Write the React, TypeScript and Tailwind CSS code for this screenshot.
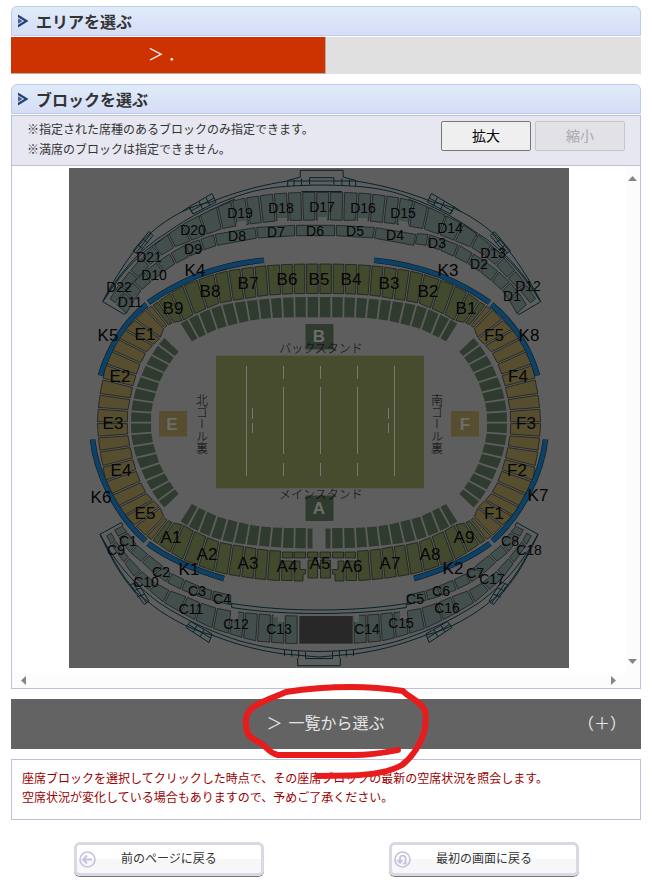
import React from 'react';

type Cut = [number, number, number, number];
type Label = [string, number, number];

// Each cut runs from the outer edge to the inner edge of a ring: x1, y1, x2, y2
const upperStand: Cut[] = [
  [319, 264, 319, 293.5], [305.7, 264, 305.7, 293.5], [293.2, 264.3, 293.5, 293.7],
  [280.3, 264.8, 281.5, 294.2], [266.7, 265.7, 269, 295], [254, 267, 257, 296.5],
  [240.7, 269, 244.7, 298.7], [228, 271, 232.5, 300.5], [214.5, 274.3, 219.5, 303],
  [198, 280, 206.7, 308.3], [183.5, 285.7, 194, 314], [170.7, 293, 183, 320.5],
  [158.5, 301.5, 173, 322.5], [152.3, 305.7, 167.5, 325],
];
const goalStand: Cut[] = [
  [152.3, 305.7, 167.5, 325], [146, 309.5, 164, 328], [135.7, 320, 160, 338],
  [125, 329.5, 153, 345], [116.7, 337.8, 146, 352.5], [110, 350, 140.3, 363.5],
  [105.5, 364.3, 136, 375], [103, 379, 132.7, 386.7], [100, 394.3, 130, 398.7],
  [98.3, 408.3, 127.8, 410.5], [97.3, 422.7, 127.3, 422.7],
];
const lowerSide: Cut[] = [
  [319, 297, 319, 317.3], [306.7, 297, 306.7, 317.3], [294.3, 297.3, 294.7, 317.3],
  [282, 297.8, 283, 317.5], [270, 298.7, 272, 318], [258, 299.7, 260.5, 319],
  [246, 301, 249.5, 320.7], [233.7, 302.8, 238.5, 323.3], [221.7, 305.3, 227.5, 326],
  [210.3, 309, 217, 329], [198.7, 314, 206.5, 334], [188, 319.3, 198.3, 338],
  [180, 324.3, 191, 341.7],
];
const lowerGoal: Cut[] = [
  [165, 337.3, 179.3, 351], [158.3, 345, 174.3, 356.7], [151.7, 355, 169, 364.3],
  [146, 365, 164, 372.7], [141, 376.3, 159.3, 382.3], [136.3, 387.7, 156, 392.3],
  [133.3, 399.3, 153, 402.3], [131.3, 411.3, 151.2, 412.7], [131, 422.7, 151, 422.7],
];
const dOuter: Cut[] = [
  [315.8, 192.3, 315.8, 220], [301.7, 192.5, 302.5, 220.3], [287.3, 193, 289.3, 220.3],
  [273.3, 194, 276, 221], [259.3, 196, 262.3, 222.5], [245.7, 198, 249.5, 224],
  [231.7, 201.3, 236.7, 226], [217.3, 207, 222, 228.7], [199.5, 215.5, 206, 234.5],
  [182.5, 224.5, 191, 240.5], [168, 234.5, 174.5, 247], [153.7, 246, 161, 255.5],
  [142, 257.5, 149.5, 265], [130, 271, 138, 277.5], [119.5, 284.5, 126.5, 289],
  [109.5, 299.5, 114.5, 303.5],
];
const dInnerStart: Cut[] = [
  [295.5, 225.3, 295.5, 235.7], [255.7, 227.5, 257.3, 238], [214.5, 234.5, 216.5, 245.5],
];
const dInnerEnd: Cut[] = [
  [214.5, 234.5, 216.5, 245.5], [200, 239.5, 203.5, 250], [185, 245, 189, 256.5],
  [170.5, 253.5, 175.5, 263.5], [157, 262.5, 163.5, 271.5], [145, 271.5, 151.5, 281],
  [133.5, 282.5, 141.5, 290], [125, 292.5, 134, 300.5], [116.5, 305.5, 126, 314],
];
const cInner: Cut[] = [
  [114.3, 529, 121.7, 525.7], [118.5, 537, 127.5, 532.5], [130, 552.3, 136.5, 545],
  [141.7, 561.7, 148.5, 555], [154.3, 573.3, 163.3, 566.7], [167, 582.3, 171, 573.3],
  [181, 589.3, 184.5, 580], [196.7, 595.7, 200, 586.7], [211, 600, 212.7, 591],
  [231.5, 605, 231.7, 595.5],
];
const cOuter: Cut[] = [
  [106.3, 535, 110.7, 532.3], [111.7, 545, 115.5, 541], [124.3, 562.7, 129, 558],
  [134.3, 576.7, 141, 571], [149, 590, 155.5, 583], [163.7, 602.3, 169.7, 590.7],
  [180, 611.7, 186.7, 597], [195.3, 620, 200.5, 603], [212.7, 628.3, 216.7, 608.3],
  [229, 633.5, 231.7, 611.3], [242.7, 637.7, 245, 612.7], [256.7, 641, 258.3, 614],
  [270.7, 642.3, 271.3, 615], [284.7, 643.3, 284.7, 615.7], [298, 643.7, 298, 616],
];

const smallLabels: Label[] = [
  ['D22', 119, 287], ['D21', 149, 257], ['D20', 193, 230], ['D19', 240, 213], ['D18', 281, 208],
  ['D17', 322, 207], ['D16', 363, 208], ['D15', 403, 213], ['D14', 450, 228], ['D13', 493, 253],
  ['D12', 528, 286], ['D11', 130, 302], ['D10', 154, 275], ['D9', 193, 249], ['D8', 237, 236],
  ['D7', 276, 232], ['D6', 315, 231], ['D5', 355, 231], ['D4', 395, 235], ['D3', 437, 243],
  ['D2', 479, 264], ['D1', 512, 296], ['C1', 128, 541], ['C9', 116, 550], ['C2', 161, 572],
  ['C10', 146, 582], ['C3', 197, 591], ['C4', 222, 599], ['C11', 191, 609], ['C12', 236, 624],
  ['C13', 279, 629], ['C14', 367, 629], ['C15', 401, 623], ['C16', 447, 608], ['C5', 415, 599],
  ['C6', 441, 591], ['C7', 475, 573], ['C17', 492, 579], ['C8', 510, 541], ['C18', 529, 550],
];
const bigLabels: Label[] = [
  ['B9', 173, 308], ['B8', 210, 291], ['B7', 248, 283], ['B6', 287, 279], ['B5', 319, 279],
  ['B4', 351, 279], ['B3', 389, 283], ['B2', 428, 291], ['B1', 466, 308], ['E1', 145, 334],
  ['E2', 120, 376], ['E3', 113, 423], ['E4', 121, 470], ['E5', 145, 513], ['F5', 494, 335],
  ['F4', 518, 376], ['F3', 526, 423], ['F2', 517, 470], ['F1', 494, 513], ['A1', 171, 537],
  ['A2', 207, 554], ['A3', 248, 563], ['A4', 287, 566], ['A5', 320, 563], ['A6', 352, 566],
  ['A7', 390, 563], ['A8', 430, 554], ['A9', 464, 537],
];
const kLabels: Label[] = [
  ['K4', 195, 270], ['K3', 448, 270], ['K5', 108, 335], ['K8', 529, 335],
  ['K6', 101, 497], ['K7', 538, 495], ['K1', 189, 569], ['K2', 453, 568],
];

const flipX = (cuts: Cut[], c: number): Cut[] =>
  cuts.map(([a, b, d, e]) => [2 * c - a, b, 2 * c - d, e]);
const flipY = (cuts: Cut[], c: number): Cut[] =>
  cuts.map(([a, b, d, e]) => [a, 2 * c - b, d, 2 * c - e]);

const towards = (x1: number, y1: number, x2: number, y2: number, by: number) => {
  const t = by / Math.hypot(x2 - x1, y2 - y1);
  return `${x1 + (x2 - x1) * t},${y1 + (y2 - y1) * t}`;
};

interface BandProps {
  cuts: Cut[];
  fill: string;
  plain?: boolean;
}

const Band: React.FC<BandProps> = ({ cuts, fill, plain }) => (
  <g fill={fill} stroke={plain ? 'none' : '#14191a'} strokeWidth="0.7">
    {cuts.slice(1).map((b, i) => {
      const a = cuts[i];
      const points = [
        towards(a[0], a[1], b[0], b[1], 0.9),
        towards(b[0], b[1], a[0], a[1], 0.9),
        towards(b[2], b[3], a[2], a[3], 0.9),
        towards(a[2], a[3], b[2], b[3], 0.9),
      ];
      return <polygon key={i} points={points.join(' ')} />;
    })}
  </g>
);

interface LabelsProps {
  items: Label[];
  size: number;
}

const Labels: React.FC<LabelsProps> = ({ items, size }) => (
  <g fontSize={size} textAnchor="middle" fill="#050505">
    {items.map(([text, x, y]) => (
      <text key={text} x={x} y={y + Math.round(size * 0.36)}>{text}</text>
    ))}
  </g>
);

const olive = '#414a2d';
const gold = '#564e2e';
const slate = '#424f4d';
const moss = '#2f3b2e';

const DOutline = () => (
  <g>
    <path d="M102.7 301.7C115 277 134 248 150 233.5C170 216 192 205 211 202C240 190 268 184 287.7 181H321.7" />
    <path d="M102.7 301.7C122 268 145 246 165 234C190 216 215 203 247 193C265 188 283 185.500 321.700 185" />
    <path d="M104 300C125 268 140 253 165 237C190 220 212 209 235 199" />
    <path d="M102.700 301.700L124.500 314.500L127.500 311" />
    <path d="M189 207L212 193.500L216 202L193 214ZM199 201.500L203 209.500M206 197.500L210 206M191 211L214 198M183 211L189 207M189 207L193 214" />
    <path d="M133 251L149 231.500L153 235.500L138 254ZM138 245L143 249M143 239L148 243M136 253L151 233.500" />
    <path d="M300.300 177V170.300H321.700M309.500 184.500V177.700H321.700M287.700 180.500V186.500M294 179.500V186M301.500 178.500V185.500" />
    <path d="M300.300 177L287.700 180.500M301.500 191.500H321.700" />
  </g>
);

const COutline = () => (
  <g>
    <path d="M100 534.300L121.500 522.500L123 526M100 534.300C112 560 126 588 146 600C163 615 190 630 212 635C240 646 262 651 284 654L319 657" />
    <path d="M100 534.300C118 567 136 585 158 602C188 622 215 633 240 641C262 647 284 651 319 651.500" />
    <path d="M100 534.300C110 553 120 574 134 589" />
    <path d="M129.500 585L137 582L149 601L144.500 604.500ZM133 591L140.500 588M137 597L145 594M133.500 584L146.500 603" />
    <path d="M186 627.500L190.500 621.500L212 634L209 642.500ZM193 632L197 625.500M200 637L204 629.500M188.500 624.500L210.500 638" />
    <path d="M297.700 658V665.700H319M305.500 651.500V658.500H319M284.500 649.500V656M291.700 650V656.500M298.700 650.500V657.500" />
    <path d="M231.700 603V607.500C260 612 290 613.500 319 613.500M231.700 603.500C260 608 290 610 319 610" />
  </g>
);

const StadiumMap = () => (
  <svg
    className="h-auto w-[500px] max-w-full"
    viewBox="69 168 500 500"
    role="img"
    aria-label="座席ブロック"
    fontFamily='"Liberation Sans", "Noto Sans CJK JP", sans-serif'
  >
    <rect x="69" y="168" width="500" height="500" fill="#5e5e5e" />

    <g fill="none" stroke="#06222a" strokeWidth="1">
      <DOutline />
      <g transform="matrix(-1 0 0 1 643.4 0)"><DOutline /></g>
      <COutline />
      <g transform="matrix(-1 0 0 1 638 0)"><COutline /></g>
    </g>

    {/* upper tiers */}
    <Band cuts={dOuter} fill={slate} />
    <Band cuts={flipX(dOuter, 322.7)} fill={slate} />
    <Band cuts={[dOuter[0], [329.6, 192.3, 329.6, 220]]} fill={slate} />
    <Band cuts={dInnerStart} fill={slate} />
    <Band cuts={flipX(dInnerStart, 315.5)} fill={slate} />
    <Band cuts={[dInnerStart[0], [335.5, 225.3, 335.5, 235.7]]} fill={slate} />
    <Band cuts={dInnerEnd} fill={slate} />
    <Band cuts={[[416.5, 233.5, 414.5, 243.5], ...flipX(dInnerEnd, 321.7)]} fill={slate} />
    <Band cuts={cInner} fill={slate} />
    <Band cuts={flipX(cInner, 319)} fill={slate} />
    <Band cuts={cOuter} fill={slate} />
    <Band cuts={flipX(cOuter, 319).slice(0, -1)} fill={slate} />
    <g fill="#5e5e5e">
      <path d="M318 217h9v4h-9zM277.500 218h9.500v4h-9.500zM358 218h9.500v4h-9.500zM237 222l9-1.500v5l-9 1.500zM399 220.500l9 1.500v5l-9-1.500z" />
      <path d="M231 611h7v8h-7zM273.500 614h6v3h-6zM278 614h6v8h-6zM354 614h5v8h-5zM400 611h7v8h-7z" />
    </g>
    <rect x="299.300" y="616" width="53.400" height="27.700" fill="#282828" />

    {/* main ring */}
    <Band cuts={upperStand} fill={olive} />
    <Band cuts={flipX(upperStand, 319)} fill={olive} />
    <Band cuts={flipY(upperStand.slice(3), 422.7)} fill={olive} />
    <Band cuts={flipX(flipY(upperStand.slice(3), 422.7), 319)} fill={olive} />
    <Band cuts={goalStand} fill={gold} />
    <Band cuts={flipX(goalStand, 319)} fill={gold} />
    <Band cuts={flipY(goalStand, 422.7)} fill={gold} />
    <Band cuts={flipX(flipY(goalStand, 422.7), 319)} fill={gold} />
    <g fill={olive} stroke="#14191a" strokeWidth="0.7">
      <path d="M282.500 552h10.500v6h-10.500zM294 552h11.500v6h-11.500zM307.500 552h10.500v6h-10.500zM320 552h10.500v6h-10.500zM332.500 552h11v6h-11zM345 552h10.500v6h-10.500z" />
      <path d="M282 561h10v19.500h-10.500zM308 560h9.500v18h-9.500zM320.500 560h10v18h-10zM346 561h10l.5 19.500h-10.500z" />
      <path d="M294 561h6v8.500h5.500v4.500h-2.500v7h-9zM344 561h-6v8.500h-5.500v4.500h2.500v7h9z" />
    </g>

    {/* lower seats */}
    <Band cuts={lowerSide} fill={moss} plain />
    <Band cuts={flipX(lowerSide, 319)} fill={moss} plain />
    <Band cuts={flipY(lowerSide.slice(1), 422.7)} fill={moss} plain />
    <Band cuts={flipX(flipY(lowerSide.slice(1), 422.7), 319)} fill={moss} plain />
    <path d="M307.500 528.500h5v20h-5zM325.500 528.500h5v20h-5z" fill={moss} />
    <Band cuts={lowerGoal} fill={moss} plain />
    <Band cuts={flipX(lowerGoal, 319)} fill={moss} plain />
    <Band cuts={flipY(lowerGoal, 422.7)} fill={moss} plain />
    <Band cuts={flipX(flipY(lowerGoal, 422.7), 319)} fill={moss} plain />

    {/* K seats */}
    {['#14191a', '#0c4168'].map((color, i) => (
      <g key={color} fill="none" stroke={color} strokeWidth={i ? 4.4 : 5.6}>
        {['', 'matrix(-1 0 0 1 638 0)'].map((transform) => (
          <g key={transform} transform={transform || undefined}>
            <path d="M264 260.200C240 262.500 218 268 199 275C180 283 164 291.500 148.500 302.500" />
            <path d="M146.500 304.500C126 321 109 346 100.500 375.500" />
            <path d="M92.500 439.500C96 472 115 514 145.500 541" />
            <path d="M148 543.500C170 560 195 570 224 578.500" />
          </g>
        ))}
      </g>
    ))}

    {/* pitch */}
    <rect x="216" y="355.700" width="208" height="132.500" fill="#484c2e" />
    <path
      d="M246.500 366v110M394.500 366v110M283.500 366v13m0 8v67m0 9v13M320.500 366v13m0 8v67m0 9v13M357.500 366v13m0 8v67m0 9v13M252.500 408v11m0 4v10M388.500 408v11m0 4v10"
      stroke="#777870"
      strokeWidth="1"
      fill="none"
    />

    <rect x="305.500" y="324" width="28" height="25.500" fill={moss} />
    <rect x="305.500" y="495.500" width="28" height="25.500" fill={moss} />
    <rect x="159" y="411" width="28" height="25.500" fill={gold} />
    <rect x="451" y="411" width="28" height="25.500" fill={gold} />
    <g fontSize="17" fontWeight="bold" textAnchor="middle" fill="#6c6d6a">
      <text x="319" y="342">B</text>
      <text x="319" y="514">A</text>
      <text x="172" y="430">E</text>
      <text x="465" y="430">F</text>
    </g>

    <g fontFamily='"Noto Sans CJK JP", sans-serif' fontSize="12" fontWeight="300" fill="#080808">
      <text x="321" y="353" textAnchor="middle">バックスタンド</text>
      <text x="321" y="499" textAnchor="middle">メインスタンド</text>
      <text x="202" y="394" style={{ writingMode: 'vertical-rl' }}>北ゴール裏</text>
      <text x="437" y="394" style={{ writingMode: 'vertical-rl' }}>南ゴール裏</text>
    </g>

    <Labels items={smallLabels} size={14} />
    <Labels items={kLabels} size={17} />
    <Labels items={bigLabels} size={17} />
  </svg>
);

interface SectionTitleProps {
  children: React.ReactNode;
}

const SectionTitle: React.FC<SectionTitleProps> = ({ children }) => (
  <h2 className="flex h-[30px] items-center gap-[7px] rounded-t-md border border-[#bccaec] bg-gradient-to-b from-[#dfebf9] to-[#d5ddf6] pl-[5px] text-base leading-[28px] font-bold text-[#333333]">
    <svg className="h-[14px] w-[12px]" viewBox="0 0 12 14" aria-hidden="true">
      <path d="M1 0.500L11.500 7L1 13.500V10.800L7.300 7L1 3.200Z" fill="#263f7b" />
      <path d="M1 4.200L5.600 7L1 9.800Z" fill="#4a5f92" />
    </svg>
    <span className="pb-px">{children}</span>
  </h2>
);

interface BackButtonProps {
  label: string;
  children: React.ReactNode;
}

const BackButton: React.FC<BackButtonProps> = ({ label, children }) => (
  <button
    type="button"
    className="flex h-[34px] w-[190px] items-center rounded-md border-[3px] border-[#d9d8e4] bg-gradient-to-b from-white from-50% to-[#f7f7f9] to-50% pl-[2px] text-xs text-[#333333] shadow-[0_1px_0_#777777]"
  >
    <svg className="h-[17px] w-[17px]" viewBox="0 0 17 17" fill="none" stroke="#c4c2de" aria-hidden="true">
      <circle cx="8.500" cy="8.500" r="7.500" strokeWidth="1.600" />
      {children}
    </svg>
    <span className="flex-1 pr-[18px] pb-[2px] text-center">{label}</span>
  </button>
);

const App: React.FC = () => {
  return (
    <main className="bg-white pr-[10px] pb-1 pl-[11px] pt-[6px] font-['Noto_Sans_CJK_JP',sans-serif] text-[#333333]">
      <SectionTitle>エリアを選ぶ</SectionTitle>
      <div className="mt-px mb-[10px] grid h-[37px] grid-cols-2 bg-[#e0e0e0]">
        <button type="button" className="flex items-center justify-center gap-1 border-r border-b border-[#b9aaa4] bg-[#cc3300] pr-1 pb-1 text-base text-white">
          <span>＞</span>
          <span>．</span>
        </button>
      </div>

      <SectionTitle>ブロックを選ぶ</SectionTitle>
      <section className="mt-px border border-[#bfbfdc]">
        <div className="flex h-[50px] items-start justify-between border-b border-[#bfbfdc] bg-[#e7e7f1] pr-[15px] pl-[15px]">
          <p className="pt-[3px] text-xs leading-[20px]">
            ※指定された席種のあるブロックのみ指定できます。
            <br />
            ※満席のブロックは指定できません。
          </p>
          <div className="flex gap-1 pt-[5px] text-sm">
            <button type="button" className="h-[30px] w-[90px] rounded-xs border border-[#767676] bg-[#efefef] pb-[2px] text-black">
              拡大
            </button>
            <button type="button" disabled className="h-[30px] w-[90px] rounded-xs border border-[#c5c5cc] bg-[#e1e1e6] pb-[2px] text-[#aaaaac]">
              縮小
            </button>
          </div>
        </div>

        <div className="grid grid-cols-[1fr_15px]">
          <div className="flex justify-center pt-[2px] pb-[5px]">
            <StadiumMap />
          </div>
          <div className="flex flex-col items-center justify-between bg-[#fcfcfc] pt-[10px] pb-[9px]">
            <svg className="h-[5px] w-[9px]" viewBox="0 0 9 5" aria-hidden="true">
              <path d="M0 5L4.500 0L9 5Z" fill="#858585" />
            </svg>
            <svg className="h-[5px] w-[9px]" viewBox="0 0 9 5" aria-hidden="true">
              <path d="M0 0L4.500 5L9 0Z" fill="#858585" />
            </svg>
          </div>
          <div className="flex h-[15px] items-center justify-between bg-[#fcfcfc] px-[9px]">
            <svg className="h-[9px] w-[5px]" viewBox="0 0 5 9" aria-hidden="true">
              <path d="M5 0L0 4.500L5 9Z" fill="#858585" />
            </svg>
            <svg className="h-[9px] w-[5px]" viewBox="0 0 5 9" aria-hidden="true">
              <path d="M0 0L5 4.500L0 9Z" fill="#858585" />
            </svg>
          </div>
          <div className="bg-[#fcfcfc]" />
        </div>
      </section>

      <div className="relative mt-[10px]">
        <button type="button" className="grid h-[50px] w-full grid-cols-[1fr_auto_1fr] items-center bg-[#636363] pr-[15px] pb-1 text-base text-[#e6e6e6]">
          <span />
          <span className="flex gap-[6px] pl-[14px]">
            <span>＞</span>
            <span>一覧から選ぶ</span>
          </span>
          <span className="text-right">（＋）</span>
        </button>
        <svg
          className="pointer-events-none absolute -top-[19px] left-1/2 h-[100px] w-[200px] -translate-x-1/2"
          viewBox="226 680 200 100"
          overflow="visible"
          fill="none"
          stroke="#e81c1c"
          strokeWidth="6"
          strokeLinecap="round"
          strokeLinejoin="round"
          aria-hidden="true"
        >
          <path d="M398 750C382 753 372 755 355 755H278C271 754 268 749 262 744C255 740 248 737 247 731C245 721 245 717 250 710C258 702 270 699 286 692C305 689 330 687 351 687C370 687 390 689 403 691C408 697 420 701 424 709C427 714 426 723 424 733C420 744 414 756 402 765C388 773 368 775 350 775.500L318 776" />
        </svg>
      </div>

      <p className="mt-[10px] h-[61px] border border-[#bfbfdc] px-[10px] pt-[8px] text-xs leading-[19px] text-[#990000]">
        座席ブロックを選択してクリックした時点で、その座席ブロックの最新の空席状況を照会します。
        <br />
        空席状況が変化している場合もありますので、予めご了承ください。
      </p>

      <div className="mt-[22px] grid grid-cols-2 justify-items-center">
        <BackButton label="前のページに戻る">
          <path d="M13 8.500H4.500M8 4.500L4 8.500L8 12.500" strokeWidth="1.800" />
        </BackButton>
        <BackButton label="最初の画面に戻る">
          <path d="M6 11V7.500A2.800 2.800 0 0 1 11.600 7.500V12.500H9M3.500 9L6 11.800L8.500 9" strokeWidth="1.800" />
        </BackButton>
      </div>
    </main>
  );
};

export default App;
